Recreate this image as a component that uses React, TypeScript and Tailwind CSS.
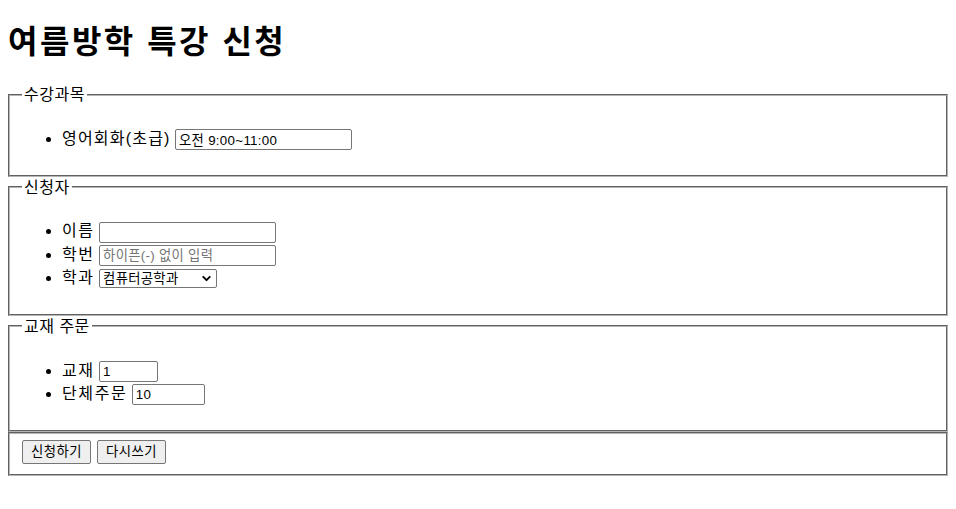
import { ChevronDown } from 'lucide-react';

const font = { fontFamily: '"Liberation Sans", "Noto Sans CJK KR", sans-serif' };

function Field({ legend, children }: { legend?: string; children: React.ReactNode }) {
  return (
    <fieldset
      className={`block w-full border-2 border-[#b5b5b5] [border-style:groove] px-3 pt-[5.6px] ${legend ? 'pb-[9px]' : 'pb-[10px]'}`}
    >
      {legend && <legend className="px-[2px] text-[16px] leading-[21px] tracking-[0.5px]">{legend}</legend>}
      {children}
    </fieldset>
  );
}

const inputCls =
  'inline-block h-[21px] rounded-[2px] border border-[#767676] bg-white px-[3px] align-middle text-[13.33px] leading-[17px] tracking-[0.3px] text-black outline-none placeholder:text-[#757575]';

function Label({ children, wide = true }: { children: React.ReactNode; wide?: boolean }) {
  return <span className={wide ? 'tracking-[1.6px]' : 'tracking-[1.2px]'}>{children}</span>;
}

export default function App() {
  return (
    <div className="min-h-[509px] bg-white px-2 text-black" style={font}>
      <h1 className="mt-[21px] mb-[21px] text-[32px] leading-[42px] font-bold tracking-[2.5px]">여름방학 특강 신청</h1>

      <form>
        <Field legend="수강과목">
          <ul className="my-4 list-disc pl-10 text-[16px] leading-[23px]">
            <li>
              <Label wide={false}>영어회화(초급)</Label>{' '}
              <input className={`${inputCls} w-[177px]`} defaultValue="오전 9:00~11:00" />
            </li>
          </ul>
        </Field>

        <Field legend="신청자">
          <ul className="my-4 list-disc pl-10 text-[16px] leading-[23px]">
            <li>
              <Label>이름</Label> <input className={`${inputCls} w-[177px]`} />
            </li>
            <li>
              <Label>학번</Label> <input className={`${inputCls} w-[177px]`} placeholder="하이픈(-) 없이 입력" />
            </li>
            <li>
              <Label>학과</Label>{' '}
              <span className="relative inline-block align-middle">
                <select className="block h-[19px] w-[118px] appearance-none rounded-[2px] border border-[#767676] bg-white pl-[3px] text-[13.33px] leading-[17px] tracking-[0.3px] text-black outline-none">
                  <option>컴퓨터공학과</option>
                  <option>전자공학과</option>
                  <option>경영학과</option>
                </select>
                <ChevronDown size={13} strokeWidth={3.5} className="pointer-events-none absolute top-[3px] right-[4px]" />
              </span>
            </li>
          </ul>
        </Field>

        <Field legend="교재 주문">
          <ul className="my-4 list-disc pl-10 text-[16px] leading-[23px]">
            <li>
              <Label>교재</Label> <input className={`${inputCls} w-[59px]`} defaultValue="1" />
            </li>
            <li>
              <Label>단체주문</Label> <input className={`${inputCls} w-[73px]`} defaultValue="10" />
            </li>
          </ul>
        </Field>

        <Field>
          <div className="flex gap-[6px]">
            <button
              type="submit"
              className="h-[24px] w-[69px] rounded-[2px] border border-[#767676] bg-[#efefef] text-[13.33px] tracking-[0.5px] text-black"
            >
              신청하기
            </button>
            <button
              type="reset"
              className="h-[24px] w-[69px] rounded-[2px] border border-[#767676] bg-[#efefef] text-[13.33px] tracking-[0.5px] text-black"
            >
              다시쓰기
            </button>
          </div>
        </Field>
      </form>
    </div>
  );
}
